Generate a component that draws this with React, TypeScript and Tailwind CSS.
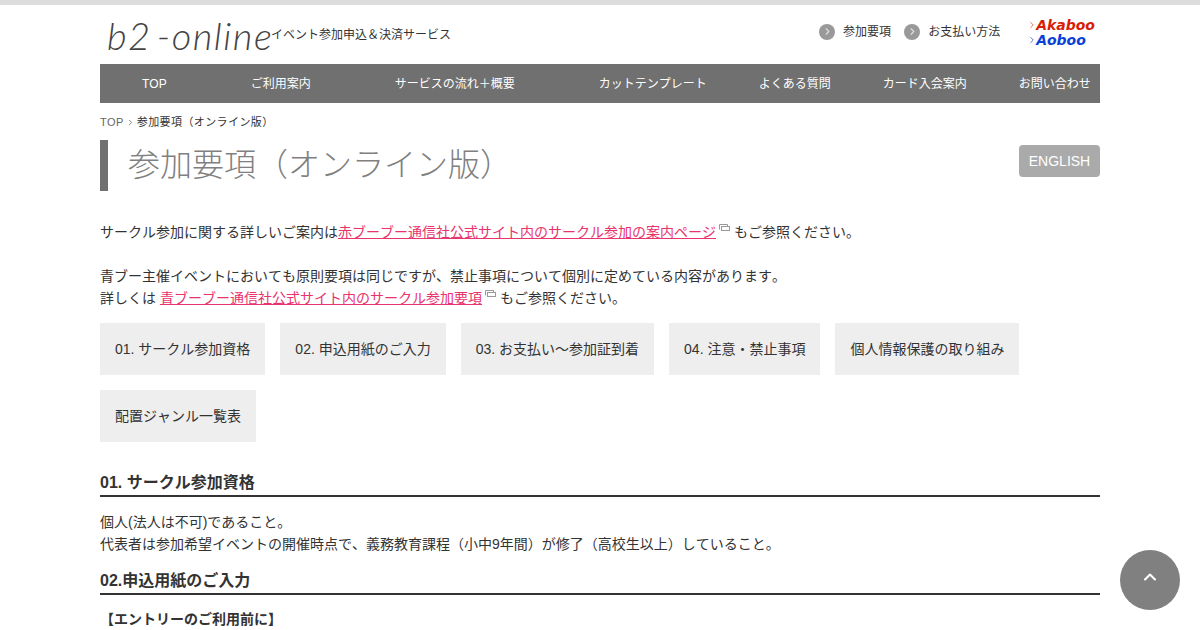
import React from 'react'
import { ChevronRight, ChevronUp } from 'lucide-react'

const font = '[font-family:"Liberation_Sans","Noto_Sans_CJK_JP",sans-serif] [font-kerning:none]'

const navItems = [
  { label: 'TOP', cls: 'pl-[42px] pr-[42px]' },
  { label: 'ご利用案内', cls: 'pl-[42px] pr-[42px]' },
  { label: 'サービスの流れ＋概要', cls: 'pl-[42px] pr-[42px]' },
  { label: 'カットテンプレート', cls: 'pl-[42px] pr-[26px]' },
  { label: 'よくある質問', cls: 'pl-[26px] pr-[26px]' },
  { label: 'カード入会案内', cls: 'pl-[26px] pr-[26px]' },
  { label: 'お問い合わせ', cls: 'pl-[26px] pr-[10px]' },
]

const anchors = [
  '01. サークル参加資格',
  '02. 申込用紙のご入力',
  '03. お支払い～参加証到着',
  '04. 注意・禁止事項',
  '個人情報保護の取り組み',
  '配置ジャンル一覧表',
]

function ExternalIcon() {
  return (
    <svg width="11" height="9" viewBox="0 0 11 9" className="absolute right-[-14px] top-0" fill="none" stroke="#999" strokeWidth="1">
      <path d="M0.5 5.5v-5h8v2" />
      <rect x="2.5" y="2.5" width="8" height="4" />
    </svg>
  )
}

function Bullet({ label }: { label: string }) {
  return (
    <a className="flex items-center gap-2 text-xs text-[#333]">
      <span className="flex h-4 w-4 items-center justify-center rounded-full bg-[#999]">
        <ChevronRight size={11} strokeWidth={2.5} className="text-[#ddd]" />
      </span>
      {label}
    </a>
  )
}

export default function App() {
  return (
    <div className={`h-[630px] overflow-hidden border-t-[5px] border-[#ddd] bg-white text-sm leading-[22px] text-[#333] ${font}`}>
      <div className="mx-auto w-[1000px]">
        <header className="flex h-[59px] items-center">
          <div className="ml-[7px] w-[164px] whitespace-nowrap font-['Lato',sans-serif] text-[38px] font-light italic leading-none tracking-[1.5px] text-[#444] [word-spacing:-6px]">
            b2 -online
          </div>
          <div className="text-xs">イベント参加申込＆決済サービス</div>
          <div className="ml-auto flex items-center gap-[13px] pb-[6px]">
            <Bullet label="参加要項" />
            <Bullet label="お支払い方法" />
          </div>
          <div className="ml-[27px] mr-[5px] flex flex-col pb-[4px] font-['DejaVu_Sans',sans-serif] text-[14px] font-bold italic leading-[15px]">
            <span className="flex items-center text-[#d81e05]">
              <ChevronRight size={10} className="mr-[-1px] text-[#e05a4a]" />
              Akaboo
            </span>
            <span className="flex items-center text-[#0a3fd8]">
              <ChevronRight size={10} className="mr-[-1px] text-[#3a5fd8]" />
              Aoboo
            </span>
          </div>
        </header>

        <nav className="flex h-[39px] items-center bg-[#707070] text-xs text-white">
          {navItems.map(item => (
            <a key={item.label} className={`whitespace-nowrap ${item.cls}`}>{item.label}</a>
          ))}
        </nav>

        <div className="mt-[8px] flex h-[22px] items-center text-[11px] tracking-[0.4px]">
          <span className="text-[#666]">TOP</span>
          <ChevronRight size={9} className="mx-[2px] text-[#666]" />
          <span>参加要項（オンライン版）</span>
        </div>

        <div className="mt-[7px] flex h-[51px] items-start justify-between border-l-[8px] border-[#707070] pl-[20px]">
          <h1 className="text-[32px] font-light leading-[51px] text-[#808080]">参加要項（オンライン版）</h1>
          <a className="mt-[5px] flex h-[32px] w-[81px] items-center justify-center rounded bg-[#aaa] text-sm text-white">ENGLISH</a>
        </div>

        <div className="mt-[30px]">
          <p>
            サークル参加に関する詳しいご案内は
            <a className="relative mr-[18px] text-[#e8336d] underline">赤ブーブー通信社公式サイト内のサークル参加の案内ページ<ExternalIcon /></a>
            もご参照ください。
          </p>
          <p className="mt-[22px]">青ブー主催イベントにおいても原則要項は同じですが、禁止事項について個別に定めている内容があります。</p>
          <p>
            詳しくは{' '}
            <a className="relative mr-[18px] text-[#e8336d] underline">青ブーブー通信社公式サイト内のサークル参加要項<ExternalIcon /></a>
            もご参照ください。
          </p>
        </div>

        <div className="mt-[14px] flex flex-wrap gap-[15px]">
          {anchors.map(label => (
            <a key={label} className="flex h-[52px] items-center bg-[#eee] px-[15px]">{label}</a>
          ))}
        </div>

        <h2 className="mt-[29px] border-b-2 border-[#333] text-base font-bold leading-[24px]">01. サークル参加資格</h2>
        <p className="mt-[14px]">個人(法人は不可)であること。</p>
        <p>代表者は参加希望イベントの開催時点で、義務教育課程（小中9年間）が修了（高校生以上）していること。</p>

        <h2 className="mt-[14px] border-b-2 border-[#333] text-base font-bold leading-[24px]">02.申込用紙のご入力</h2>
        <p className="mt-[13px] font-bold">【エントリーのご利用前に】</p>
      </div>

      <a className="fixed bottom-[20px] right-[20px] flex h-[60px] w-[60px] items-center justify-center rounded-full bg-[#808080]">
        <ChevronUp size={20} strokeWidth={2.5} className="mb-[6px] text-white" />
      </a>
    </div>
  )
}
